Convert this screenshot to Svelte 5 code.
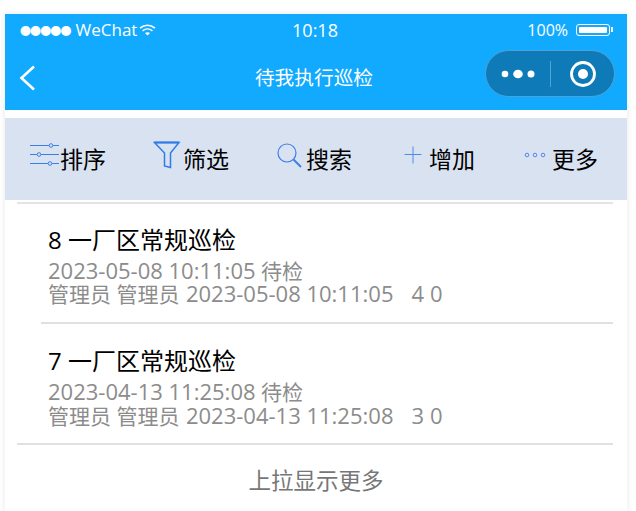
<script>
    let tools = [
        { name: '排序', icon: 'sort' },
        { name: '筛选', icon: 'filter' },
        { name: '搜索', icon: 'search' },
        { name: '增加', icon: 'plus' },
        { name: '更多', icon: 'more' }
    ]
    let list = [
        { no: 8, name: '一厂区常规巡检', time: '2023-05-08 10:11:05', status: '待检', user: '管理员 管理员', total: 4, done: 0 },
        { no: 7, name: '一厂区常规巡检', time: '2023-04-13 11:25:08', status: '待检', user: '管理员 管理员', total: 3, done: 0 }
    ]
</script>

<div class="page">
    <div class="phone">
        <div class="header">
            <div class="status">
                <div class="status-left">
                    <span class="dots">●●●●●</span>
                    <span class="carrier">WeChat</span>
                    <svg width="17" height="12" viewBox="0 0 17 12" fill="none" stroke="#fff" stroke-width="1.6">
                        <path d="M1 4.2C5.5 .3 11.5 .3 16 4.2" />
                        <path d="M3.6 6.8C6.5 4.3 10.5 4.3 13.4 6.8" />
                        <path d="M8.5 11.5L6 9.1C7.500 8 9.500 8 11 9.100Z" fill="#fff" stroke="none" />
                    </svg>
                </div>
                <div class="clock">10:18</div>
                <div class="status-right">
                    <span>100%</span>
                    <div class="battery"><div class="battery-fill"></div></div>
                    <div class="battery-tip"></div>
                </div>
            </div>
            <div class="nav">
                <svg class="back" width="16" height="26" viewBox="0 0 16 26" fill="none" stroke="#fff" stroke-width="2.6">
                    <path d="M15 1.500L2.500 13L15 24.500" />
                </svg>
                <div class="title">待我执行巡检</div>
                <div class="capsule">
                    <svg width="34" height="10" viewBox="0 0 34 10" fill="#fff">
                        <circle cx="4" cy="5" r="3.300" />
                        <ellipse cx="17" cy="5" rx="4.800" ry="4.300" />
                        <circle cx="30" cy="5" r="3.500" />
                    </svg>
                    <div class="capsule-line"></div>
                    <svg width="28" height="28" viewBox="0 0 28 28" fill="none">
                        <circle cx="14" cy="14" r="11.500" stroke="#fff" stroke-width="2.800" />
                        <circle cx="14" cy="14" r="5" fill="#fff" />
                    </svg>
                </div>
            </div>
        </div>

        <div class="toolbar">
            {#each tools as tool}
                <div class="tool tool-{tool.icon}">
                    {#if tool.icon === 'sort'}
                        <svg width="32" height="24" viewBox="0 0 32 24" fill="none" stroke="#3a7fe6" stroke-width="1">
                            <path d="M1 2.500H20M24 2.500H30M1 11.500H8M12 11.500H30M1 20.500H19M23 20.500H30" />
                            <circle cx="22" cy="2.500" r="1.800" />
                            <circle cx="10" cy="11.500" r="1.800" />
                            <circle cx="21" cy="20.500" r="1.800" />
                        </svg>
                    {:else if tool.icon === 'filter'}
                        <svg width="28" height="28" viewBox="0 0 28 28" fill="none" stroke="#2f7de8" stroke-width="1.500">
                            <path d="M1.500 1.500H26L17.500 12V26.500L11.500 25V12Z" />
                            <path d="M1.500 1.500L26 1.500" stroke-width="2" />
                        </svg>
                    {:else if tool.icon === 'search'}
                        <svg width="25" height="25" viewBox="0 0 25 25" fill="none" stroke="#3f7fe6" stroke-width="1.200">
                            <circle cx="10" cy="10" r="9" />
                            <path d="M16.500 16.500L24 24" stroke-width="2" />
                        </svg>
                    {:else if tool.icon === 'plus'}
                        <svg width="18" height="18" viewBox="0 0 18 18" fill="none" stroke="#4f8ce8" stroke-width="1">
                            <path d="M9 .5V17.500M.5 8.500H17.500" />
                        </svg>
                    {:else}
                        <svg width="22" height="6" viewBox="0 0 22 6" fill="none" stroke="#5b86e6" stroke-width="1">
                            <circle cx="3" cy="3" r="1.800" />
                            <circle cx="11" cy="3" r="1.800" />
                            <circle cx="19" cy="3" r="1.800" />
                        </svg>
                    {/if}
                    <span>{tool.name}</span>
                </div>
            {/each}
        </div>

        <div class="list">
            {#each list as item, i}
                <div class="row" class:last={i === list.length - 1}>
                    <div class="row-title">{item.no} {item.name}</div>
                    <div class="row-sub"><span class="num">{item.time}</span> {item.status}</div>
                    <div class="row-sub">{item.user} <span class="num date">{item.time}</span><span class="num count">&nbsp;&nbsp; {item.total} {item.done}</span></div>
                </div>
            {/each}
        </div>
        <div class="more">上拉显示更多</div>
    </div>
</div>

<style>
    :global(body) {
        margin: 0;
        background: #fff;
    }
    .page {
        width: 636px;
        height: 511px;
        overflow: hidden;
        padding: 14px 9px 0 5px;
        box-sizing: border-box;
        font-family: "Open Sans", "Noto Sans CJK SC", sans-serif;
    }
    .phone {
        width: 622px;
        height: 497px;
        background: #fff;
        box-shadow: 0 0 6px rgba(0, 0, 0, .1);
    }
    .header {
        height: 96px;
        background: #11aaff;
        color: #fff;
    }
    .status {
        display: flex;
        align-items: center;
        justify-content: space-between;
        height: 31px;
        padding: 0 14px 0 15px;
        font-size: 17px;
    }
    .status-left {
        display: flex;
        align-items: center;
        gap: 2px;
        width: 200px;
    }
    .dots {
        font-size: 11px;
        letter-spacing: -.9px;
    }
    .carrier {
        margin-left: 3px;
    }
    .clock {
        margin-left: -3px;
        font-size: 18px;
    }
    .status-right {
        display: flex;
        align-items: center;
        justify-content: flex-end;
        width: 200px;
        font-size: 16px;
    }
    .battery {
        width: 34px;
        height: 12px;
        margin-left: 8px;
        padding: 2px;
        border: 1px solid #fff;
        border-radius: 3px;
        box-sizing: border-box;
    }
    .battery-fill {
        height: 100%;
        background: #fff;
        border-radius: 1px;
    }
    .battery-tip {
        width: 2px;
        height: 5px;
        margin-left: 1px;
        background: #fff;
    }
    .nav {
        display: flex;
        align-items: center;
        justify-content: space-between;
        height: 65px;
        padding: 0 12px 2px 14px;
        box-sizing: border-box;
    }
    .back {
        margin-top: 3px;
    }
    .title {
        margin-left: 108px;
        font-size: 19.700px;
    }
    .capsule {
        display: flex;
        align-items: center;
        width: 130px;
        height: 47px;
        margin-top: -6px;
        padding-left: 15px;
        box-sizing: border-box;
        background: #0f7ab8;
        border: 1px solid #4ba3d8;
        border-radius: 24px;
    }
    .capsule-line {
        width: 1px;
        height: 26px;
        margin: 0 18px 0 15px;
        background: #4ba3d8;
    }
    .toolbar {
        display: flex;
        align-items: center;
        height: 82px;
        margin-top: 8px;
        padding-left: 24px;
        padding-bottom: 2px;
        box-sizing: border-box;
        background: #d9e2f1;
        color: #000;
        font-size: 23px;
    }
    .tool {
        display: flex;
        align-items: center;
        justify-content: flex-end;
        width: 123px;
    }
    .tool-sort {
        width: 77px;
    }
    .tool svg {
        margin-top: -6px;
    }
    .tool-sort svg {
        margin-right: -1px;
    }
    .tool-filter svg {
        margin-right: 2px;
    }
    .tool-search svg {
        margin-right: 4px;
    }
    .tool-plus svg {
        margin-right: 7px;
    }
    .tool-more svg {
        margin-right: 6px;
    }
    .list {
        margin-top: 2px;
        border-top: 2px solid #e4e4e4;
        margin-left: 12px;
        margin-right: 14px;
    }
    .row {
        margin-left: 24px;
        padding: 18px 0 16px 7px;
        border-bottom: 2px solid #e0e0e0;
    }
    .row.last {
        margin-left: 0;
        padding: 19px 0 15px 31px;
    }
    .row-title {
        font-size: 24px;
        line-height: 36px;
        margin-bottom: 1px;
        color: #000;
    }
    .row-sub {
        font-size: 21px;
        line-height: 24px;
        color: #8c8c8c;
    }
    .row-sub + .row-sub {
        margin-top: -1px;
    }
    .row.last .row-sub + .row-sub {
        margin-top: 0;
    }
    .num {
        font-size: 22px;
        line-height: 0;
    }
    .date,
    .count {
        margin-left: 1px;
    }
    .more {
        margin-top: 16px;
        text-align: center;
        font-size: 22.500px;
        line-height: 40px;
        color: #777;
    }
</style>
